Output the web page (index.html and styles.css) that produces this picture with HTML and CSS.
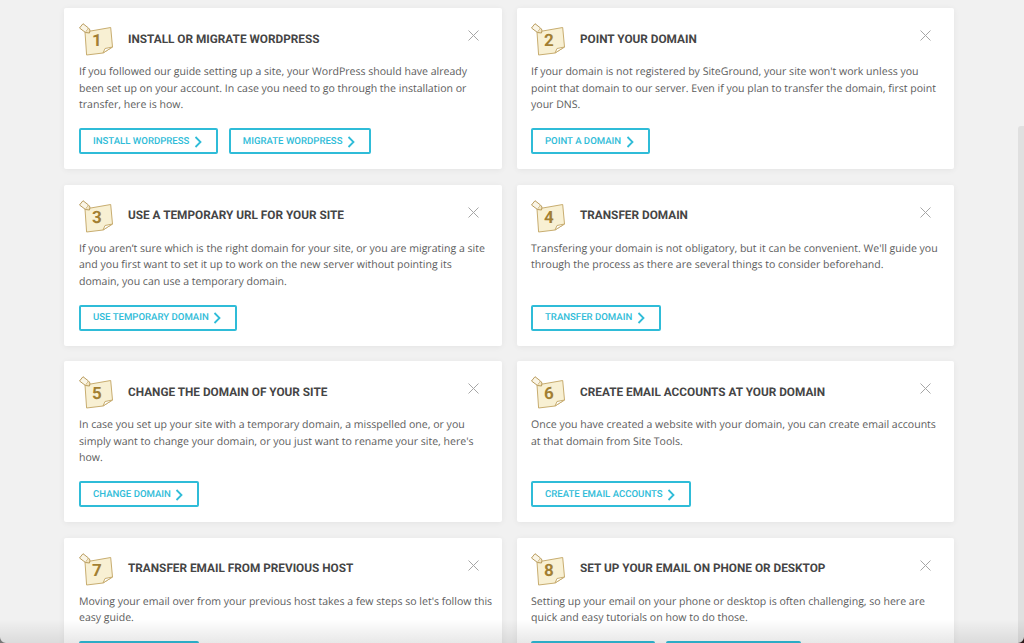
FILE: index.html
```html
<!DOCTYPE html>
<html lang="en">
<head>
<meta charset="utf-8">
<title>Getting started</title>
<link rel="stylesheet" href="styles.css">
</head>
<body>
	<svg class="defs" width="0" height="0">
		<symbol id="note" viewBox="0 0 36 36">
			<path d="M6 9 L31.700 4.500 L33.500 24 L24 30 L7.600 32 Z" fill="#f8f0d3" stroke="#c8ad70" stroke-width="1"/>
			<path d="M24 30 L26 25.500 L33.500 24 Z" fill="#fff" stroke="#c8ad70" stroke-width="1"/>
			<path d="M.5 5 L4 .7 L9.500 5 L6.500 9.500 Z" fill="#faf5e6" stroke="#b99c5e" stroke-width="1"/>
			<path d="M6.500 9.500 L10.500 10 L11 7 L9.500 5" fill="#f3e6c2" stroke="#b99c5e" stroke-width="1"/>
		</symbol>
		<symbol id="chev" viewBox="0 0 8 12">
			<path d="M1.500 1 L6.500 6 L1.500 11" fill="none" stroke="currentColor" stroke-width="1.800"/>
		</symbol>
	</svg>

	<div class="cards">
		<div class="card">
			<div class="head">
				<div class="step"><svg class="note"><use href="#note"/></svg><span class="num">1</span></div>
				<h3>Install or migrate WordPress</h3>
				<svg class="close" viewBox="0 0 11 11"><path d="M.5.5l10 10M10.500.5l-10 10"/></svg>
			</div>
			<p>If you followed our guide setting up a site, your WordPress should have already<br>been set up on your account. In case you need to go through the installation or<br>transfer, here is how.</p>
			<div class="actions">
				<a class="btn">Install WordPress <svg class="chev"><use href="#chev"/></svg></a>
				<a class="btn">Migrate WordPress <svg class="chev"><use href="#chev"/></svg></a>
			</div>
		</div>

		<div class="card">
			<div class="head">
				<div class="step"><svg class="note"><use href="#note"/></svg><span class="num">2</span></div>
				<h3>Point your domain</h3>
				<svg class="close" viewBox="0 0 11 11"><path d="M.5.5l10 10M10.500.5l-10 10"/></svg>
			</div>
			<p>If your domain is not registered by SiteGround, your site won't work unless you<br>point that domain to our server. Even if you plan to transfer the domain, first point<br>your DNS.</p>
			<div class="actions">
				<a class="btn">Point a domain <svg class="chev"><use href="#chev"/></svg></a>
			</div>
		</div>

		<div class="card">
			<div class="head">
				<div class="step"><svg class="note"><use href="#note"/></svg><span class="num">3</span></div>
				<h3>Use a temporary URL for your site</h3>
				<svg class="close" viewBox="0 0 11 11"><path d="M.5.5l10 10M10.500.5l-10 10"/></svg>
			</div>
			<p>If you aren’t sure which is the right domain for your site, or you are migrating a site<br>and you first want to set it up to work on the new server without pointing its<br>domain, you can use a temporary domain.</p>
			<div class="actions">
				<a class="btn">Use temporary domain <svg class="chev"><use href="#chev"/></svg></a>
			</div>
		</div>

		<div class="card">
			<div class="head">
				<div class="step"><svg class="note"><use href="#note"/></svg><span class="num">4</span></div>
				<h3>Transfer domain</h3>
				<svg class="close" viewBox="0 0 11 11"><path d="M.5.5l10 10M10.500.5l-10 10"/></svg>
			</div>
			<p>Transfering your domain is not obligatory, but it can be convenient. We'll guide you<br>through the process as there are several things to consider beforehand.</p>
			<div class="actions">
				<a class="btn">Transfer domain <svg class="chev"><use href="#chev"/></svg></a>
			</div>
		</div>

		<div class="card">
			<div class="head">
				<div class="step"><svg class="note"><use href="#note"/></svg><span class="num">5</span></div>
				<h3>Change the domain of your site</h3>
				<svg class="close" viewBox="0 0 11 11"><path d="M.5.5l10 10M10.500.5l-10 10"/></svg>
			</div>
			<p>In case you set up your site with a temporary domain, a misspelled one, or you<br>simply want to change your domain, or you just want to rename your site, here's<br>how.</p>
			<div class="actions">
				<a class="btn">Change domain <svg class="chev"><use href="#chev"/></svg></a>
			</div>
		</div>

		<div class="card">
			<div class="head">
				<div class="step"><svg class="note"><use href="#note"/></svg><span class="num">6</span></div>
				<h3>Create email accounts at your domain</h3>
				<svg class="close" viewBox="0 0 11 11"><path d="M.5.5l10 10M10.500.5l-10 10"/></svg>
			</div>
			<p>Once you have created a website with your domain, you can create email accounts<br>at that domain from Site Tools.</p>
			<div class="actions">
				<a class="btn">Create email accounts <svg class="chev"><use href="#chev"/></svg></a>
			</div>
		</div>

		<div class="card">
			<div class="head">
				<div class="step"><svg class="note"><use href="#note"/></svg><span class="num">7</span></div>
				<h3>Transfer email from previous host</h3>
				<svg class="close" viewBox="0 0 11 11"><path d="M.5.5l10 10M10.500.5l-10 10"/></svg>
			</div>
			<p>Moving your email over from your previous host takes a few steps so let's follow this<br>easy guide.</p>
			<div class="actions">
				<a class="btn btn-w120"></a>
			</div>
		</div>

		<div class="card">
			<div class="head">
				<div class="step"><svg class="note"><use href="#note"/></svg><span class="num">8</span></div>
				<h3>Set up your email on phone or desktop</h3>
				<svg class="close" viewBox="0 0 11 11"><path d="M.5.5l10 10M10.500.5l-10 10"/></svg>
			</div>
			<p>Setting up your email on your phone or desktop is often challenging, so here are<br>quick and easy tutorials on how to do those.</p>
			<div class="actions">
				<a class="btn btn-w124"></a>
				<a class="btn btn-w135"></a>
			</div>
		</div>
	</div>

	<div class="scrollthumb"></div>
	<div class="fade"></div>
	<div class="corner corner-left"></div>
	<div class="corner corner-right"></div>
</body>
</html>
```

FILE: styles.css
```css
html, body {
	height: 100%;
	overflow: hidden;
}

body {
	margin: 0;
	background: #f1f1f1;
	font: 10.550px "Open Sans", sans-serif;
	color: #5c5c5c;
	text-rendering: geometricPrecision;
}

.defs {
	display: block;
	height: 0;
}

.cards {
	display: grid;
	grid-template-columns: 438px 437px;
	gap: 15.670px 15px;
	padding: 8px 0 0 64px;
}

.card {
	display: flex;
	flex-direction: column;
	background: #fff;
	border-radius: 2px;
	box-shadow: 0 1px 6px rgba(0, 0, 0, 0.06);
	padding: 15px;
}

.card:nth-child(even) {
	padding-left: 14px;
}

.head {
	display: flex;
	align-items: center;
	height: 31px;
	position: relative;
}

.step {
	position: relative;
	align-self: flex-start;
	width: 36px;
	height: 36px;
	margin-right: 13px;
	flex: none;
}

.note {
	display: block;
	width: 36px;
	height: 36px;
}

.num {
	position: absolute;
	left: 13px;
	top: 7px;
	font: 700 17px/22px Roboto, sans-serif;
	color: #a27f33;
}

h3 {
	margin: 0;
	font: 700 11.800px/16px Roboto, sans-serif;
	text-transform: uppercase;
	color: #454545;
}

.close {
	position: absolute;
	right: 8px;
	top: 7px;
	width: 11px;
	height: 11px;
	fill: none;
	stroke: #a6a6a6;
	stroke-width: 1;
}

p {
	margin: 10px 0 0;
	line-height: 16.500px;
	white-space: nowrap;
}

.actions {
	display: flex;
	gap: 11px;
	margin-top: auto;
	padding-top: 14.500px;
}

.btn {
	display: flex;
	align-items: center;
	height: 26px;
	box-sizing: border-box;
	padding: 1px 14px 0 12px;
	border: 2px solid #2fbcd8;
	border-radius: 2px;
	font: 500 9.600px/1 Roboto, sans-serif;
	text-transform: uppercase;
	color: #2fbcd8;
	white-space: pre;
}

.btn-w120 {
	width: 120px;
}

.btn-w124 {
	width: 124px;
}

.btn-w135 {
	width: 135px;
}

.chev {
	width: 8px;
	height: 12px;
	margin-left: 2px;
}

.scrollthumb {
	position: absolute;
	right: 0;
	top: 126px;
	width: 6px;
	height: 517px;
	background: #e0e0e0;
	border-radius: 3px 0 0 0;
}

.fade {
	position: absolute;
	left: 0;
	right: 0;
	bottom: 0;
	height: 24px;
	background: linear-gradient(rgba(0, 0, 0, 0), rgba(0, 0, 0, 0.09));
}

.corner {
	position: absolute;
	bottom: 0;
	width: 6px;
	height: 6px;
}

.corner-left {
	left: 0;
	background: #777;
	clip-path: path("M0 0 A6 6 0 0 0 6 6 L0 6 Z");
}

.corner-right {
	right: 0;
	background: #2a1a1a;
	clip-path: path("M6 0 A6 6 0 0 1 0 6 L6 6 Z");
}
```
